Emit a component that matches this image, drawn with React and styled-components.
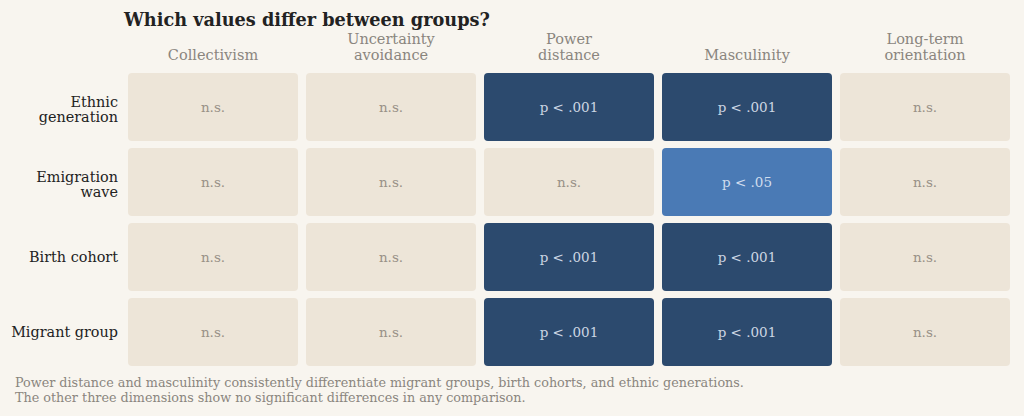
import styled, { createGlobalStyle } from 'styled-components'

const GlobalStyle = createGlobalStyle`
body {
    margin: 0;
    background: #f8f5ef;
    font-family: "DejaVu Serif", "Liberation Serif", serif;
}
`

const Page = styled.div`
width: 1024px;
height: 416px;
background: #f8f5ef;
box-sizing: border-box;
padding-top: 9px;
`

const Title = styled.h2`
margin: 0 0 0 124px;
font-size: 17.7px;
line-height: 22px;
font-weight: bold;
color: #222;
`

const Grid = styled.div`
display: grid;
grid-template-columns: 120px repeat(5, 170px);
grid-template-rows: 35px repeat(4, 68px);
column-gap: 8px;
row-gap: 7px;
`

const ColHead = styled.div`
display: flex;
align-items: flex-end;
justify-content: center;
text-align: center;
font-size: 14.5px;
line-height: 16px;
color: #8a857e;
padding-bottom: 3px;
`

const RowHead = styled.div`
display: flex;
align-items: center;
justify-content: flex-end;
text-align: right;
padding-right: 2px;
padding-top: ${p => (p.$multi ? '5px' : '0')};
font-size: 14.4px;
line-height: 15px;
color: #222;
`

const levels = {
    ns: { bg: '#ede5d8', fg: '#999187' },
    strong: { bg: '#2c4a6e', fg: '#ccd6e3' },
    weak: { bg: '#4a7ab5', fg: '#d0ddee' },
}

const Cell = styled.div`
display: flex;
align-items: center;
justify-content: center;
border-radius: 4px;
font-size: 13.5px;
background: ${p => levels[p.$level].bg};
color: ${p => levels[p.$level].fg};
`

const Note = styled.p`
margin: 9px 0 0 15px;
font-size: 12.75px;
line-height: 15px;
color: #8a857e;
`

const columns = [
    ['Collectivism'],
    ['Uncertainty', 'avoidance'],
    ['Power', 'distance'],
    ['Masculinity'],
    ['Long-term', 'orientation'],
]

const rows = [
    { label: ['Ethnic', 'generation'], cells: ['ns', 'ns', 'strong', 'strong', 'ns'] },
    { label: ['Emigration', 'wave'], cells: ['ns', 'ns', 'ns', 'weak', 'ns'] },
    { label: ['Birth cohort'], cells: ['ns', 'ns', 'strong', 'strong', 'ns'] },
    { label: ['Migrant group'], cells: ['ns', 'ns', 'strong', 'strong', 'ns'] },
]

const cellText = { ns: 'n.s.', strong: 'p < .001', weak: 'p < .05' }

function Lines ({ parts }) {
    return parts.map((t, i) => <span key={i}>{t}{i < parts.length - 1 && <br />}</span>)
}

function App () {
    return (
        <Page>
            <GlobalStyle />
            <Title>Which values differ between groups?</Title>
            <Grid>
                <div />
                {columns.map((c, i) => (
                    <ColHead key={i}><div><Lines parts={c} /></div></ColHead>
                ))}
                {rows.map((r, ri) => [
                    <RowHead key={'h' + ri} $multi={r.label.length > 1}><div><Lines parts={r.label} /></div></RowHead>,
                    ...r.cells.map((lv, ci) => (
                        <Cell key={ri + '-' + ci} $level={lv}>{cellText[lv]}</Cell>
                    )),
                ])}
            </Grid>
            <Note>
                Power distance and masculinity consistently differentiate migrant groups, birth cohorts, and ethnic generations.<br />
                The other three dimensions show no significant differences in any comparison.
            </Note>
        </Page>
    )
}

export default App
